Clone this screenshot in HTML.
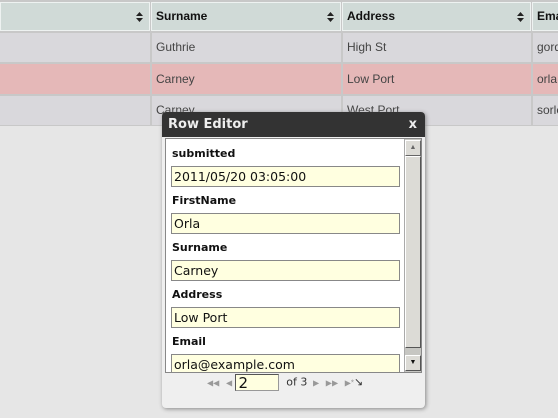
<!DOCTYPE html>
<html><head><style>
body{margin:0;width:558px;height:418px;background:#e6e6e6;font-family:"Liberation Sans",sans-serif;position:relative;overflow:hidden}
.c{position:absolute;box-sizing:border-box;font-size:12px;color:#444;padding-left:4px}
.h{background:#d0dad7;color:#111;font-weight:bold;border:1px solid #eef2f1}
.r{background:#d9d8dc}
.p{background:#e5b8b8}
.s{position:absolute;right:6px;top:9px}
.dlg{position:absolute;left:162px;top:112px;width:263px;height:296px;background:#efefef;border-radius:4px;box-shadow:1px 1px 4px #888}
.t{height:25px;background:#333;color:#eee;font:bold 13px "DejaVu Sans",sans-serif;line-height:25px;padding-left:6px;border-radius:4px 4px 0 0;position:relative}
.box{position:absolute;left:3px;top:26px;width:255px;height:233px;background:#fff;border:1px solid #888;overflow:hidden}
.l{position:absolute;left:6px;font:bold 11px "DejaVu Sans",sans-serif;color:#111}
.i{position:absolute;left:5px;width:229px;height:21px;box-sizing:border-box;border:1px solid #888;background:#ffffe0;font:12.5px "DejaVu Sans",sans-serif;color:#111;padding-left:2px;line-height:19px}
.sb{position:absolute;left:238px;top:0;width:16px;height:233px;background:#c6c6c2;border-left:1px solid #aaa}
</style></head><body>
<div style="position:absolute;left:0;top:0;width:558px;height:126px;background:#c8c8c8"></div>
<div class="c h" style="left:0;top:2px;width:150px;height:29px"><svg class="s" width="7" height="10"><path d="M0 4L3.5 0L7 4Z M0 6L3.5 10L7 6Z" fill="#222"/></svg></div>
<div class="c h" style="left:151px;top:2px;width:190px;height:29px;line-height:27px">Surname<svg class="s" width="7" height="10"><path d="M0 4L3.5 0L7 4Z M0 6L3.5 10L7 6Z" fill="#222"/></svg></div>
<div class="c h" style="left:342px;top:2px;width:189px;height:29px;line-height:27px">Address<svg class="s" width="7" height="10"><path d="M0 4L3.5 0L7 4Z M0 6L3.5 10L7 6Z" fill="#222"/></svg></div>
<div class="c h" style="left:532px;top:2px;width:40px;height:29px;line-height:27px">Ema</div>
<div class="c r" style="left:0;top:33px;width:150px;height:29px"></div>
<div class="c r" style="left:152px;top:33px;width:189px;height:29px;line-height:29px">Guthrie</div>
<div class="c r" style="left:343px;top:33px;width:188px;height:29px;line-height:29px">High St</div>
<div class="c r" style="left:533px;top:33px;width:40px;height:29px;line-height:29px">gord</div>
<div class="c p" style="left:0;top:64px;width:150px;height:30px"></div>
<div class="c p" style="left:152px;top:64px;width:189px;height:30px;line-height:30px">Carney</div>
<div class="c p" style="left:343px;top:64px;width:188px;height:30px;line-height:30px">Low Port</div>
<div class="c p" style="left:533px;top:64px;width:40px;height:30px;line-height:30px">orla@</div>
<div class="c r" style="left:0;top:96px;width:150px;height:29px"></div>
<div class="c r" style="left:152px;top:96px;width:189px;height:29px;line-height:29px">Carney</div>
<div class="c r" style="left:343px;top:96px;width:188px;height:29px;line-height:29px">West Port</div>
<div class="c r" style="left:533px;top:96px;width:40px;height:29px;line-height:29px">sorle</div>
<div class="dlg">
<div class="t">Row Editor<span style="position:absolute;right:8px">x</span></div>
<div class="box">
<div class="l" style="top:8px">submitted</div><div class="i" style="top:27px">2011/05/20 03:05:00</div>
<div class="l" style="top:55px">FirstName</div><div class="i" style="top:74px">Orla</div>
<div class="l" style="top:102px">Surname</div><div class="i" style="top:121px">Carney</div>
<div class="l" style="top:149px">Address</div><div class="i" style="top:168px">Low Port</div>
<div class="l" style="top:196px">Email</div><div class="i" style="top:215px">orla@example.com</div>
<div class="sb">
<div style="position:absolute;left:0;top:1px;width:14px;height:14px;background:#dcdbd6;border:1px solid #666;border-top-color:#fff;border-left-color:#fff;font-size:7px;color:#666;text-align:center;line-height:14px">▲</div>
<div style="position:absolute;left:0;top:17px;width:14px;height:190px;background:#dcdbd6;border:1px solid #555;border-top-color:#fff;border-left-color:#fff"></div>
<div style="position:absolute;left:0;top:216px;width:14px;height:14px;background:#dcdbd6;border:1px solid #555;border-top-color:#fff;border-left-color:#fff;font-size:7px;color:#111;text-align:center;line-height:14px">▼</div>
</div>
</div>
<div style="position:absolute;top:262px;left:45px;font-size:12px;color:#999;white-space:nowrap">
<span style="font-size:8px">◀◀ &nbsp; ◀</span>
<span style="display:inline-block;width:44px;height:17px;background:#ffffe0;border:1px solid #999;border-top-color:#555;border-left-color:#555;color:#111;font:15px 'DejaVu Sans',sans-serif;line-height:16px;vertical-align:middle;box-sizing:border-box;padding-left:2px">2</span>
<span style="color:#333;font-size:11px;font-family:'DejaVu Sans'">&nbsp;of 3</span>
<span style="font-size:8px">&nbsp;▶ &nbsp; ▶▶ &nbsp; ▶*</span><span style="color:#333;font-size:11px">↘</span>
</div>
</div>
</body></html>
